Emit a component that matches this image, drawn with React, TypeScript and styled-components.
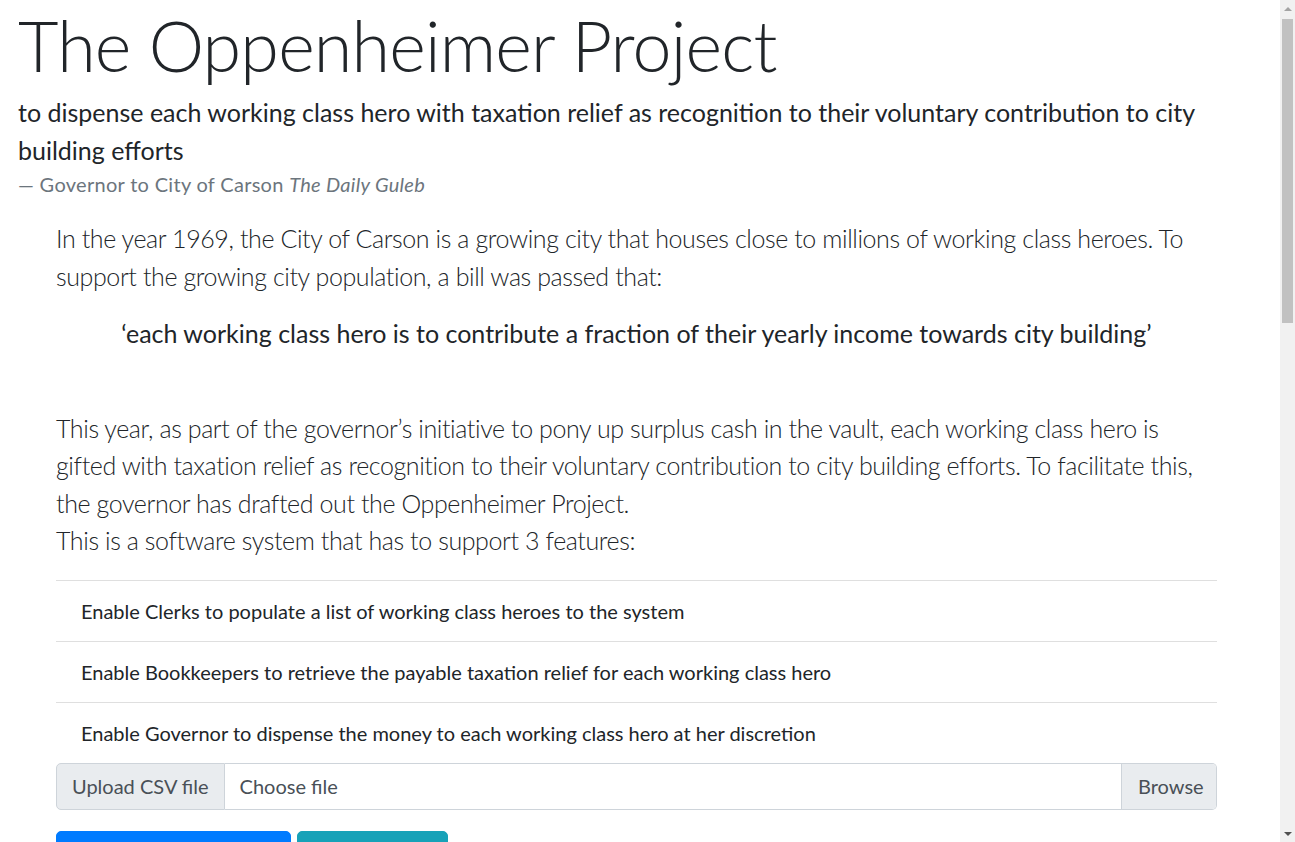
import React from "react";
import styled, { createGlobalStyle } from "styled-components";

const GlobalStyle = createGlobalStyle`
  html {
    font-size: 20px;
  }
  body {
    margin: 0;
    font-family: Lato, "Open Sans", sans-serif;
    font-size: 1rem;
    line-height: 1.5;
    color: #212529;
    background: #fff;
  }
  * {
    box-sizing: border-box;
  }
`;

const features = [
  "Enable Clerks to populate a list of working class heroes to the system",
  "Enable Bookkeepers to retrieve the payable taxation relief for each working class hero",
  "Enable Governor to dispense the money to each working class hero at her discretion",
];

const App: React.FC = () => {
  return (
    <>
      <GlobalStyle />
      <Page>
        <Title>The Oppenheimer Project</Title>
        <Blockquote>
          <QuoteText>
            to dispense each working class hero with taxation relief as recognition to their voluntary
            contribution to city building efforts
          </QuoteText>
          <QuoteFooter>
            Governor to City of Carson <cite>The Daily Guleb</cite>
          </QuoteFooter>
        </Blockquote>

        <Content>
          <Lead>
            In the year 1969, the City of Carson is a growing city that houses close to millions of working
            class heroes. To support the growing city population, a bill was passed that:
          </Lead>
          <BillQuote>
            ‘each working class hero is to contribute a fraction of their yearly income towards city building’
          </BillQuote>
          <Lead>
            This year, as part of the governor’s initiative to pony up surplus cash in the vault, each working
            class hero is gifted with taxation relief as recognition to their voluntary contribution to city
            building efforts. To facilitate this, the governor has drafted out the Oppenheimer Project.
            <br />
            This is a software system that has to support 3 features:
          </Lead>

          <FeatureList>
            {features.map((feature, index) => (
              <FeatureItem key={index}>{feature}</FeatureItem>
            ))}
          </FeatureList>

          <InputGroup>
            <InputPrepend>Upload CSV file</InputPrepend>
            <FileField>
              <FileLabel>Choose file</FileLabel>
              <BrowseButton>Browse</BrowseButton>
            </FileField>
          </InputGroup>

          <ButtonRow>
            <ActionButton $colour="#007bff" $width={235}>Upload to System</ActionButton>
            <ActionButton $colour="#17a2b8" $width={151}>Retrieve</ActionButton>
          </ButtonRow>
        </Content>
      </Page>

      <ScrollTrack aria-hidden>
        <ScrollArrow $up />
        <ScrollThumb />
        <ScrollArrow />
      </ScrollTrack>
    </>
  );
};

const Page = styled.div`
  margin-right: 15px;
  padding: 0 15px 0 18px;
  min-height: 3660px;
`;

const Title = styled.h1`
  font-size: 3.5rem;
  font-weight: 300;
  line-height: 1.2;
  letter-spacing: -0.8px;
  margin: 0 0 0.5rem 0;
  padding-top: 3px;
  height: 84px;
`;

const Blockquote = styled.blockquote`
  margin: 0 0 1rem 0;
  font-size: 1.25rem;
`;

const QuoteText = styled.p`
  margin: 0;
`;

const QuoteFooter = styled.footer`
  display: block;
  font-size: 80%;
  color: #6c757d;
  letter-spacing: 0.3px;

  &::before {
    content: "\\2014\\00A0";
  }

  cite {
    font-style: italic;
  }
`;

const Content = styled.div`
  margin: 0 48px 0 38px;
  padding-top: 1px;
`;

const Lead = styled.p`
  font-size: 1.25rem;
  font-weight: 300;
  letter-spacing: -0.4px;
  margin: 0 0 1rem 0;
`;

const BillQuote = styled.p`
  font-size: 1.25rem;
  text-align: center;
  margin: 0 0 57px 0;
`;

const FeatureList = styled.ul`
  list-style: none;
  margin: 18px 0 0 0;
  padding: 0;
  display: flex;
  flex-direction: column;
`;

const FeatureItem = styled.li`
  padding: 0.75rem 1.25rem;
  border-top: 1px solid rgba(0, 0, 0, 0.125);
`;

const InputGroup = styled.div`
  display: flex;
  height: 47px;
`;

const InputPrepend = styled.div`
  display: flex;
  align-items: center;
  padding: 0 0.75rem;
  background: #e9ecef;
  color: #495057;
  border: 1px solid #ced4da;
  border-radius: 0.25rem 0 0 0.25rem;
  white-space: nowrap;
`;

const FileField = styled.div`
  flex: 1;
  display: flex;
  align-items: stretch;
  border: 1px solid #ced4da;
  border-left: 0;
  border-radius: 0 0.25rem 0.25rem 0;
  overflow: hidden;
  color: #495057;
`;

const FileLabel = styled.div`
  flex: 1;
  display: flex;
  align-items: center;
  padding: 0 0.75rem;
  background: #fff;
`;

const BrowseButton = styled.div`
  display: flex;
  align-items: center;
  padding: 0 0.75rem 0 0.8rem;
  background: #e9ecef;
  border-left: 1px solid #ced4da;
  width: 95px;
`;

const ButtonRow = styled.div`
  display: flex;
  gap: 6px;
  margin-top: 21px;
`;

const ActionButton = styled.button<{ $colour: string; $width: number }>`
  width: ${({ $width }) => $width}px;
  height: 47px;
  padding: 0.375rem 0.75rem;
  font-family: inherit;
  font-size: 1rem;
  line-height: 1.5;
  color: #fff;
  background: ${({ $colour }) => $colour};
  border: 1px solid ${({ $colour }) => $colour};
  border-radius: 0.25rem;
  cursor: pointer;
`;

const ScrollTrack = styled.div`
  position: fixed;
  top: 0;
  right: 0;
  width: 15px;
  height: 100vh;
  background: #f1f1f1;
  display: flex;
  flex-direction: column;
  align-items: center;
`;

const ScrollArrow = styled.div<{ $up?: boolean }>`
  flex: 0 0 17px;
  width: 15px;
  display: flex;
  align-items: center;
  justify-content: center;
  margin-top: ${({ $up }) => ($up ? "0" : "auto")};

  &::after {
    content: "";
    width: 0;
    height: 0;
    border-left: 4px solid transparent;
    border-right: 4px solid transparent;
    ${({ $up }) =>
      $up ? "border-bottom: 4px solid #a3a3a3;" : "border-top: 4px solid #505050;"}
  }
`;

const ScrollThumb = styled.div`
  width: 11px;
  height: 304px;
  margin-top: 2px;
  background: #c1c1c1;
`;

export default App;
